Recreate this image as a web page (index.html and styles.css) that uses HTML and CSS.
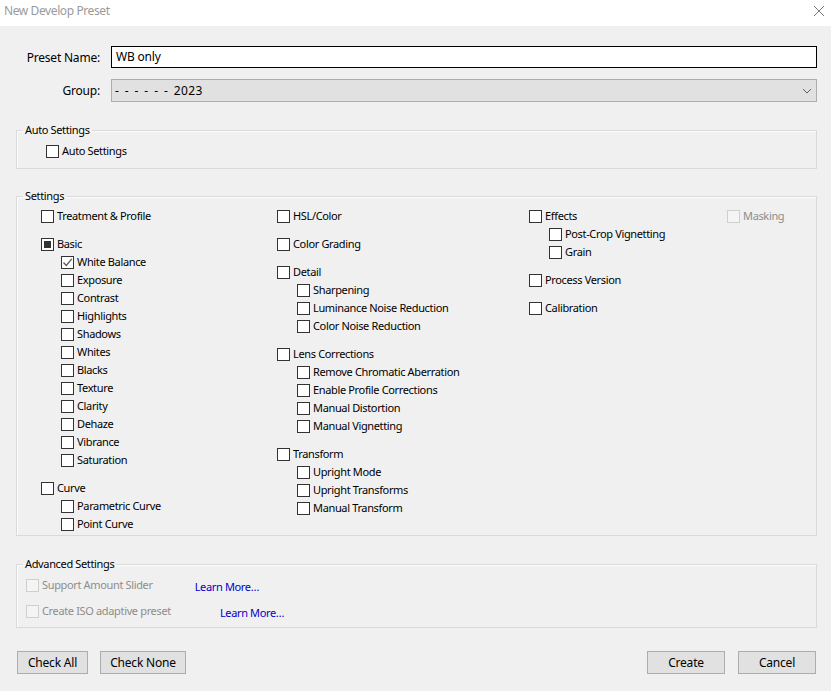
FILE: index.html
```html
<!DOCTYPE html>
<html>
<head>
<meta charset="utf-8">
<link rel="stylesheet" href="styles.css">
</head>
<body>
<div class="window">
  <div class="titlebar">
    <span class="title">New Develop Preset</span>
    <svg class="close" width="12" height="12" viewBox="0 0 12 12"><path d="M1 1L11 11M11 1L1 11" stroke="#7a7a7a" stroke-width="1" fill="none"/></svg>
  </div>
  <div class="content">
    <div class="form">
      <label class="flabel">Preset Name:</label>
      <div class="input">WB only</div>
      <label class="flabel">Group:</label>
      <div class="select"><span class="gval">- - - - - - 2023</span>
        <svg width="10" height="6" viewBox="0 0 10 6"><path d="M1 1L5 5L9 1" stroke="#606060" stroke-width="1" fill="none"/></svg>
      </div>
    </div>

    <fieldset class="group auto">
      <legend>Auto Settings</legend>
      <div class="inner">
        <div class="cb"><span class="box"></span>Auto Settings</div>
      </div>
    </fieldset>

    <fieldset class="group settings">
      <legend>Settings</legend>
      <div class="inner grid">
        <div class="col">
          <div class="cb"><span class="box"></span>Treatment &amp; Profile</div>
          <div>
            <div class="cb"><span class="box mixed"></span>Basic</div>
            <div class="sub">
              <div class="cb"><span class="box checked"><svg width="11" height="11" viewBox="0 0 11 11"><path d="M1.5 5.5L4.3 8.5L9.8 1.8" stroke="#5a5a5a" stroke-width="1.3" fill="none"/></svg></span>White Balance</div>
              <div class="cb"><span class="box"></span>Exposure</div>
              <div class="cb"><span class="box"></span>Contrast</div>
              <div class="cb"><span class="box"></span>Highlights</div>
              <div class="cb"><span class="box"></span>Shadows</div>
              <div class="cb"><span class="box"></span>Whites</div>
              <div class="cb"><span class="box"></span>Blacks</div>
              <div class="cb"><span class="box"></span>Texture</div>
              <div class="cb"><span class="box"></span>Clarity</div>
              <div class="cb"><span class="box"></span>Dehaze</div>
              <div class="cb"><span class="box"></span>Vibrance</div>
              <div class="cb"><span class="box"></span>Saturation</div>
            </div>
          </div>
          <div>
            <div class="cb"><span class="box"></span>Curve</div>
            <div class="sub">
              <div class="cb"><span class="box"></span>Parametric Curve</div>
              <div class="cb"><span class="box"></span>Point Curve</div>
            </div>
          </div>
        </div>
        <div class="col">
          <div class="cb"><span class="box"></span>HSL/Color</div>
          <div class="cb"><span class="box"></span>Color Grading</div>
          <div>
            <div class="cb"><span class="box"></span>Detail</div>
            <div class="sub">
              <div class="cb"><span class="box"></span>Sharpening</div>
              <div class="cb"><span class="box"></span>Luminance Noise Reduction</div>
              <div class="cb"><span class="box"></span>Color Noise Reduction</div>
            </div>
          </div>
          <div>
            <div class="cb"><span class="box"></span>Lens Corrections</div>
            <div class="sub">
              <div class="cb"><span class="box"></span>Remove Chromatic Aberration</div>
              <div class="cb"><span class="box"></span>Enable Profile Corrections</div>
              <div class="cb"><span class="box"></span>Manual Distortion</div>
              <div class="cb"><span class="box"></span>Manual Vignetting</div>
            </div>
          </div>
          <div>
            <div class="cb"><span class="box"></span>Transform</div>
            <div class="sub">
              <div class="cb"><span class="box"></span>Upright Mode</div>
              <div class="cb"><span class="box"></span>Upright Transforms</div>
              <div class="cb"><span class="box"></span>Manual Transform</div>
            </div>
          </div>
        </div>
        <div class="col">
          <div>
            <div class="cb"><span class="box"></span>Effects</div>
            <div class="sub">
              <div class="cb"><span class="box"></span>Post-Crop Vignetting</div>
              <div class="cb"><span class="box"></span>Grain</div>
            </div>
          </div>
          <div class="cb"><span class="box"></span>Process Version</div>
          <div class="cb"><span class="box"></span>Calibration</div>
        </div>
        <div class="col">
          <div class="cb disabled"><span class="box"></span>Masking</div>
        </div>
      </div>
    </fieldset>

    <fieldset class="group advanced">
      <legend>Advanced Settings</legend>
      <div class="inner">
        <div class="arow"><div class="cb disabled"><span class="box"></span>Support Amount Slider</div><a class="learn l1">Learn More…</a></div>
        <div class="arow"><div class="cb disabled"><span class="box"></span>Create ISO adaptive preset</div><a class="learn l2">Learn More…</a></div>
      </div>
    </fieldset>

    <div class="buttons">
      <div class="left">
        <button class="btn all">Check All</button>
        <button class="btn none">Check None</button>
      </div>
      <div class="right">
        <button class="btn wide">Create</button>
        <button class="btn wide">Cancel</button>
      </div>
    </div>
  </div>
</div>
</body>
</html>
```
FILE: styles.css
```css
* { box-sizing: border-box; }
html, body { margin: 0; padding: 0; }
body {
  width: 831px;
  height: 691px;
  background: #f0f0f0;
  font-family: "Noto Sans", "Open Sans", sans-serif;
  font-size: 11px;
  letter-spacing: -0.35px;
  color: #000;
  overflow: hidden;
}
.titlebar {
  height: 26px;
  background: #fff;
  display: flex;
  align-items: flex-start;
  justify-content: space-between;
  padding: 2px 4px 0 4px;
}
.title {
  color: #9a9a9a;
  font-size: 12px;
  line-height: 17px;
  letter-spacing: -0.4px;
}
.close { margin-right: 2px; margin-top: 3px; }
.content {
  padding: 20px 14px 0 16px;
}
.form {
  display: grid;
  grid-template-columns: 84px 1fr;
  column-gap: 11px;
  row-gap: 11px;
  align-items: center;
}
.flabel {
  text-align: right;
  font-size: 12px;
  letter-spacing: -0.2px;
}
.input {
  height: 22px;
  background: #fff;
  border: 1px solid #000;
  padding: 0 4px;
  line-height: 20px;
  font-size: 12px;
  letter-spacing: -0.2px;
}
.select {
  height: 23px;
  background: #e1e1e1;
  border: 1px solid #adadad;
  padding: 0 4px 0 3px;
  display: flex;
  align-items: center;
  justify-content: space-between;
  font-size: 12px;
  letter-spacing: -0.2px;
}
.gval { word-spacing: 2px; letter-spacing: 0.4px; }
.group {
  margin: 0;
  padding: 0;
  border: 1px solid #dadada;
  box-shadow: inset 1px 1px 0 #fcfcfc;
  min-width: 0;
}
.group legend {
  margin-left: 6px;
  padding: 0 2px;
  font-size: 11px;
  line-height: 16px;
}
.auto { margin-top: 20px; }
.auto .inner { padding: 4px 0 8px 29px; }
.settings { margin-top: 19px; }
.settings .inner { padding: 3px 0 2px 24px; }
.advanced { margin-top: 20px; }
.advanced .inner { padding: 0 0 3px 9px; }
.cb {
  display: flex;
  align-items: center;
  height: 18px;
  line-height: 18px;
  white-space: nowrap;
}
.box {
  width: 13px;
  height: 13px;
  border: 1px solid #333;
  background: #fff;
  margin-right: 3px;
  flex: none;
  display: flex;
  align-items: center;
  justify-content: center;
}
.box.mixed::after {
  content: "";
  width: 7px;
  height: 7px;
  background: #333;
}
.box.checked svg { display: block; }
.disabled { color: #8d8d8d; }
.disabled .box { border-color: #cfcfcf; background: #f4f4f4; }
.grid {
  display: grid;
  grid-template-columns: 236px 252px 198px 1fr;
}
.col {
  display: flex;
  flex-direction: column;
  gap: 10px;
}
.sub { padding-left: 20px; }
.arow {
  display: flex;
  align-items: center;
  height: 26px;
}
.learn {
  color: #0000cc;
  margin-top: 2px;
}
.learn.l1 { margin-left: 42px; }
.learn.l2 { margin-left: 49px; }
.buttons {
  margin-top: 23px;
  display: flex;
  justify-content: space-between;
  padding-left: 1px;
  padding-right: 1px;
}
.left { display: flex; gap: 12px; }
.right { display: flex; gap: 13px; }
.btn {
  height: 23px;
  background: #e1e1e1;
  border: 1px solid #adadad;
  font-family: "Noto Sans", "Open Sans", sans-serif;
  font-size: 12px;
  letter-spacing: -0.2px;
  padding: 0;
  color: #000;
}
.btn.all { width: 71px; }
.btn.none { width: 86px; }
.btn.wide { width: 78px; }
```
